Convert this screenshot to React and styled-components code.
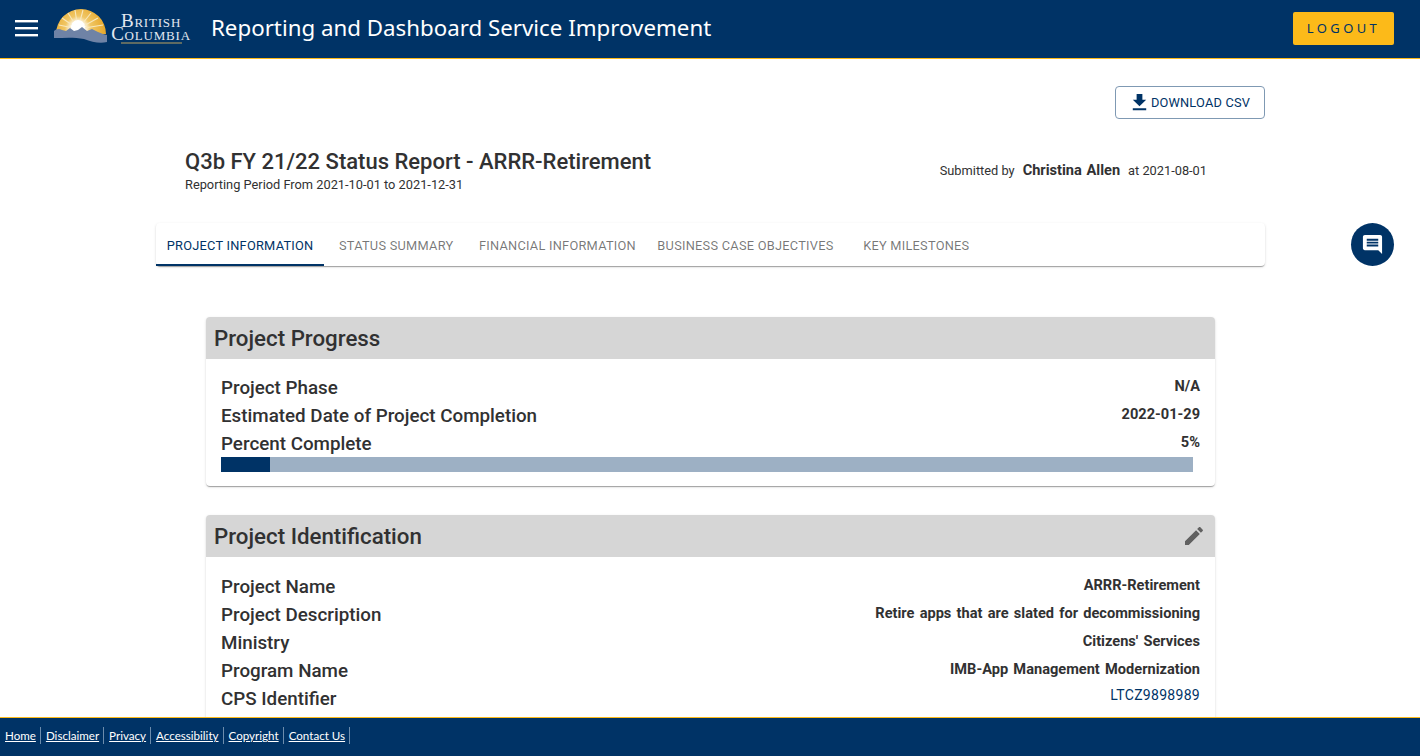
import React from "react";
import styled, {createGlobalStyle} from "styled-components";

const navy = "#003366";

const GlobalStyle = createGlobalStyle`
  html, body, #root {
    margin: 0;
    height: 100%;
    overflow: hidden;
  }
  body {
    font-family: Roboto, "Liberation Sans", sans-serif;
    color: #313132;
    background: #fff;
  }
  * {
    box-sizing: border-box;
  }
`;

const Page = styled.div`
  display: flex;
  flex-direction: column;
  height: 756px;
`;

const Header = styled.header`
  flex: 0 0 59px;
  display: flex;
  align-items: center;
  background: ${navy};
  border-bottom: 1px solid #fcba19;
  padding: 0 26px 2px 15px;
`;

const Burger = styled.svg`
  width: 23px;
  height: 18px;
  margin-right: 16px;
  flex: none;
`;

const Logo = styled.div`
  display: flex;
  flex: none;
  width: 157px;
  margin-top: -4px;
`;

const LogoWords = styled.div`
  display: flex;
  flex-direction: column;
  align-items: center;
  font-family: "Liberation Serif", serif;
  font-variant: small-caps;
  color: #e3e8f0;
  margin: 7px 0 0 3px;
  width: 80px;
`;

const LogoLine = styled.span`
  display: block;
  height: 13px;
  font-size: 19px;
  line-height: 13px;
  letter-spacing: 0.8px;
  white-space: nowrap;
`;

const LogoRule = styled.i`
  display: block;
  width: 61px;
  height: 2px;
  margin-top: 2px;
  background: #5f6b62;
`;

const AppTitle = styled.h1`
  margin: 0 0 1px;
  font-family: "Noto Sans", sans-serif;
  font-weight: 400;
  font-size: 22.3px;
  color: #fff;
  flex: 1;
`;

const LogoutButton = styled.button`
  width: 101px;
  height: 33px;
  border: 0;
  border-radius: 2px;
  background: #fcba19;
  color: ${navy};
  font-family: "Noto Sans", sans-serif;
  font-size: 13px;
  letter-spacing: 3.4px;
  padding: 0;
`;

const Main = styled.main`
  flex: 1;
  min-height: 0;
  overflow: hidden;
  padding: 27px 155px 0 156px;
  position: relative;
`;

const Actions = styled.div`
  display: flex;
  justify-content: flex-end;
`;

const DownloadButton = styled.button`
  display: flex;
  align-items: center;
  justify-content: center;
  width: 150px;
  height: 33px;
  background: #fff;
  border: 1px solid #7f99b3;
  border-radius: 4px;
  color: ${navy};
  font-family: Roboto, sans-serif;
  font-size: 12.8px;
  letter-spacing: 0.2px;
  padding: 0 2px 0 0;
`;

const ReportHead = styled.div`
  display: flex;
  justify-content: space-between;
  align-items: center;
  padding: 29px 58px 0 29px;
`;

const ReportTitle = styled.h2`
  margin: 0;
  font-size: 22px;
  line-height: 28px;
  font-weight: 500;
  color: #313132;
`;

const ReportPeriod = styled.div`
  font-size: 12.8px;
  line-height: 17px;
`;

const Submitted = styled.div`
  display: flex;
  align-items: baseline;
  gap: 8px;
  font-size: 12.8px;
  margin-top: -2px;
`;

const SubmittedName = styled.b`
  font-size: 14.6px;
  font-weight: 700;
  word-spacing: 1px;
`;

const TabBar = styled.nav`
  display: flex;
  height: 43px;
  margin-top: 30px;
  border-radius: 4px;
  background: #fff;
  box-shadow: 0 2px 1px -1px rgba(0, 0, 0, 0.2), 0 1px 1px 0 rgba(0, 0, 0, 0.14), 0 1px 3px 0 rgba(0, 0, 0, 0.12);
`;

const Tab = styled.div`
  display: flex;
  align-items: center;
  justify-content: center;
  min-width: 144px;
  padding: 4px 10.7px 0;
  font-size: 12.8px;
  letter-spacing: 0.25px;
  white-space: nowrap;
  text-transform: uppercase;
  color: ${(props) => (props.$active ? navy : "rgba(0, 0, 0, 0.54)")};
  border-bottom: 2px solid ${(props) => (props.$active ? navy : "transparent")};
`;

const Cards = styled.div`
  display: flex;
  flex-direction: column;
  gap: 29px;
  margin-top: 51px;
  padding: 0 50px;
`;

const Card = styled.section`
  border-radius: 4px;
  overflow: hidden;
  background: #fff;
  padding-bottom: 14px;
  box-shadow: 0 2px 1px -1px rgba(0, 0, 0, 0.2), 0 1px 1px 0 rgba(0, 0, 0, 0.14), 0 1px 3px 0 rgba(0, 0, 0, 0.12);
`;

const CardHeader = styled.div`
  display: flex;
  align-items: center;
  justify-content: space-between;
  height: 42px;
  background: #d6d6d6;
  padding: 0 9px 0 8px;
`;

const CardTitle = styled.h3`
  margin: 0;
  font-size: 22.3px;
  font-weight: 500;
  color: #313132;
`;

const CardBody = styled.div`
  padding: ${(props) => props.$top} 15px 0;
`;

const Row = styled.div`
  display: flex;
  justify-content: space-between;
  align-items: flex-start;
  height: 28px;
`;

const Label = styled.span`
  font-size: 18.8px;
  line-height: 28px;
  padding-top: 1px;
  font-weight: 500;
`;

const Value = styled.span`
  font-size: ${(props) => (props.$plain ? "14px" : "14.6px")};
  line-height: ${(props) => (props.$plain ? "22px" : "26px")};
  font-weight: ${(props) => (props.$plain ? 400 : 700)};
  color: ${(props) => (props.$plain ? navy : "#313132")};
  letter-spacing: ${(props) => (props.$plain ? "0.3px" : "0")};
  word-spacing: 1.6px;
`;

const Bar = styled.div`
  height: 15px;
  width: 972px;
  background: #9db0c4;
`;

const BarFill = styled.div`
  height: 100%;
  background: ${navy};
`;

const ChatButton = styled.button`
  position: absolute;
  top: 164px;
  right: 26px;
  display: flex;
  align-items: center;
  justify-content: center;
  width: 43px;
  height: 43px;
  padding: 0;
  border: 0;
  border-radius: 50%;
  background: ${navy};
`;

const Footer = styled.footer`
  flex: 0 0 39px;
  display: flex;
  align-items: center;
  background: ${navy};
  border-top: 1px solid #fcba19;
  padding-bottom: 3px;
`;

const FooterLink = styled.a`
  font-family: Lato, sans-serif;
  font-size: 11.6px;
  line-height: 17px;
  color: #fff;
  text-decoration: underline;
  padding: 0 4px 0 5px;
  border-right: 1px solid #6c8cac;
`;

const tabs = ["Project Information", "Status Summary", "Financial Information", "Business Case Objectives", "Key Milestones"];
const footerLinks = ["Home", "Disclaimer", "Privacy", "Accessibility", "Copyright", "Contact Us"];

const BcSun = () => (
    <svg width="54" height="38" viewBox="0 0 54 38" style={{flex: "none"}}>
        <defs>
            <radialGradient id="sunGlow" gradientUnits="userSpaceOnUse" cx="24" cy="22" r="26">
                <stop offset="0.25" stopColor="#fff"/>
                <stop offset="0.5" stopColor="#f0c766"/>
                <stop offset="1" stopColor="#e8aa2e"/>
            </radialGradient>
        </defs>
        <path d="M2 27 A25 25 0 0 1 52 27 Z" fill="url(#sunGlow)"/>
        <g stroke="#f8e8bd" strokeWidth="1.1">
            <line x1="24" y1="22" x2="8" y2="11"/>
            <line x1="24" y1="22" x2="14" y2="6"/>
            <line x1="24" y1="22" x2="21" y2="3"/>
            <line x1="24" y1="22" x2="29" y2="3"/>
            <line x1="24" y1="22" x2="37" y2="6"/>
            <line x1="24" y1="22" x2="44" y2="11"/>
            <line x1="24" y1="22" x2="49" y2="18"/>
            <line x1="24" y1="22" x2="5" y2="18"/>
        </g>
        <circle cx="24" cy="20" r="7" fill="#fff"/>
        <path d="M0 24 C2 22 5 21 8 23 L12 24 L16 21 L20 24 L24 23 L28 20 L33 24 L38 22 L44 25 L49 27 L53 28 L53 35 C46 37 38 35 30 32 C20 30 10 31 0 31 Z" fill="#6f83a6"/>
    </svg>
);

const BcLogo = () => (
    <Logo>
        <BcSun/>
        <LogoWords>
            <LogoLine>British</LogoLine>
            <LogoLine>Columbia</LogoLine>
            <LogoRule/>
        </LogoWords>
    </Logo>
);

const App = () => (
    <Page>
        <GlobalStyle/>
        <Header>
            <Burger viewBox="0 0 23 18">
                <rect x="0" y="1" width="23" height="2.4" fill="#fff"/>
                <rect x="0" y="8" width="23" height="2.4" fill="#fff"/>
                <rect x="0" y="15" width="23" height="2.4" fill="#fff"/>
            </Burger>
            <BcLogo/>
            <AppTitle>Reporting and Dashboard Service Improvement</AppTitle>
            <LogoutButton>LOGOUT</LogoutButton>
        </Header>
        <Main>
            <Actions>
                <DownloadButton>
                    <svg width="23" height="23" viewBox="0 0 24 24" fill={navy}>
                        <path d="M19 9h-4V3H9v6H5l7 7 7-7zM5 18v2h14v-2H5z"/>
                    </svg>
                    DOWNLOAD CSV
                </DownloadButton>
            </Actions>
            <ReportHead>
                <div>
                    <ReportTitle>Q3b FY 21/22 Status Report - ARRR-Retirement</ReportTitle>
                    <ReportPeriod>Reporting Period From 2021-10-01 to 2021-12-31</ReportPeriod>
                </div>
                <Submitted>
                    Submitted by <SubmittedName>Christina Allen</SubmittedName> at 2021-08-01
                </Submitted>
            </ReportHead>
            <TabBar>
                {tabs.map((tab, i) => (
                    <Tab key={tab} $active={i === 0}>{tab}</Tab>
                ))}
            </TabBar>
            <Cards>
                <Card>
                    <CardHeader>
                        <CardTitle>Project Progress</CardTitle>
                    </CardHeader>
                    <CardBody $top="14px">
                        <Row><Label>Project Phase</Label><Value>N/A</Value></Row>
                        <Row><Label>Estimated Date of Project Completion</Label><Value>2022-01-29</Value></Row>
                        <Row><Label>Percent Complete</Label><Value>5%</Value></Row>
                        <Bar><BarFill style={{width: "5%"}}/></Bar>
                    </CardBody>
                </Card>
                <Card>
                    <CardHeader>
                        <CardTitle>Project Identification</CardTitle>
                        <svg width="24" height="24" viewBox="0 0 24 24" fill="#616161">
                            <path d="M3 17.25V21h3.75L17.81 9.94l-3.75-3.75L3 17.25zM20.71 7.04c.39-.39.39-1.02 0-1.41l-2.34-2.34c-.39-.39-1.02-.39-1.41 0l-1.83 1.83 3.75 3.75 1.83-1.83z"/>
                        </svg>
                    </CardHeader>
                    <CardBody $top="15px">
                        <Row><Label>Project Name</Label><Value>ARRR-Retirement</Value></Row>
                        <Row><Label>Project Description</Label><Value>Retire apps that are slated for decommissioning</Value></Row>
                        <Row><Label>Ministry</Label><Value>Citizens' Services</Value></Row>
                        <Row><Label>Program Name</Label><Value>IMB-App Management Modernization</Value></Row>
                        <Row><Label>CPS Identifier</Label><Value $plain>LTCZ9898989</Value></Row>
                    </CardBody>
                </Card>
            </Cards>
            <ChatButton>
                <svg width="23" height="23" viewBox="0 0 24 24" fill="#fff">
                    <path d="M21.99 4c0-1.1-.89-2-1.99-2H4c-1.1 0-2 .9-2 2v12c0 1.1.9 2 2 2h14l4 4-.01-18zM18 14H6v-2h12v2zm0-3H6V9h12v2zm0-3H6V6h12v2z"/>
                </svg>
            </ChatButton>
        </Main>
        <Footer>
            {footerLinks.map((link) => (
                <FooterLink key={link} href="#">{link}</FooterLink>
            ))}
        </Footer>
    </Page>
);

export default App;
